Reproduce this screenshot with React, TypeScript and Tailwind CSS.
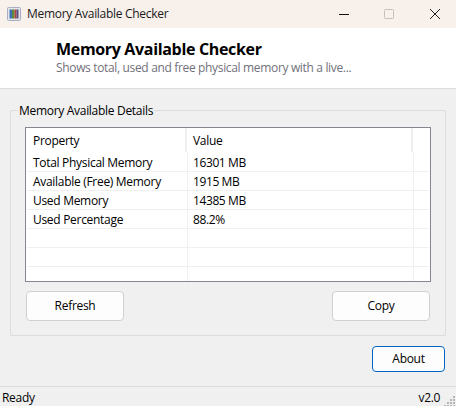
const rows: [string, string][] = [
  ["Total Physical Memory", "16301 MB"],
  ["Available (Free) Memory", "1915 MB"],
  ["Used Memory", "14385 MB"],
  ["Used Percentage", "88.2%"],
  ["", ""],
  ["", ""],
  ["", ""],
];

function AppIcon() {
  return (
    <svg width="14" height="14" viewBox="0 0 14 14" className="block">
      <rect x="0.5" y="0.5" width="13" height="13" rx="1" fill="#e4e6ee" stroke="#a8adbf" />
      <rect x="2.5" y="2.5" width="2.5" height="9" fill="#3f6fb5" />
      <rect x="5" y="2.5" width="2.5" height="9" fill="#5c8a3c" />
      <rect x="7.5" y="2.5" width="2" height="9" fill="#b0433f" />
      <rect x="9.5" y="2.5" width="2" height="9" fill="#5a4f7f" />
    </svg>
  );
}

function Btn({ label, className }: { label: string; className: string }) {
  return (
    <button className={`bg-[#fdfdfd] rounded-[4px] text-[12px] tracking-[-0.3px] text-black flex items-center justify-center ${className}`}>
      {label}
    </button>
  );
}

export default function App() {
  return (
    <div className="w-[456px] h-[406px] overflow-hidden flex flex-col bg-[#f0f0f0] text-black text-[12px] font-['Open_Sans','Noto_Sans',sans-serif]">
      <div className="h-[28px] shrink-0 bg-[#f7f0eb] flex items-center">
        <div className="ml-[7px] w-[14px]"><AppIcon /></div>
        <span className="ml-[6px] text-[12px] tracking-[-0.3px] text-[#1a1a1a]">Memory Available Checker</span>
        <div className="ml-auto flex items-center">
          <svg width="10" height="10" viewBox="0 0 10 10" className="mr-[35px]"><path d="M0 5.5h10" stroke="#111" strokeWidth="1" /></svg>
          <svg width="10" height="10" viewBox="0 0 10 10" className="mr-[36px]"><rect x="0.5" y="0.5" width="9" height="9" rx="1" fill="none" stroke="#c4c0bd" /></svg>
          <svg width="10" height="10" viewBox="0 0 10 10" className="mr-[16px]"><path d="M0 0l10 10M10 0l-10 10" stroke="#222" strokeWidth="1" /></svg>
        </div>
      </div>

      <div className="h-[61px] shrink-0 bg-white border-b border-[#dcdcdc] pl-[56px] pt-[10px]">
        <div className="text-[16px] leading-[22px] font-bold tracking-[-0.33px]">Memory Available Checker</div>
        <div className="text-[12px] leading-[15px] text-[#71717a] tracking-[-0.34px]">Shows total, used and free physical memory with a live...</div>
      </div>

      <div className="relative mx-[10px] mt-[21px] h-[226px] shrink-0 border border-[#dcdcdc] rounded-[2px] px-[14px] pt-[16px]">
        <span className="absolute left-[7px] top-[-8px] bg-[#f0f0f0] px-[1px] leading-[16px] tracking-[-0.3px]">Memory Available Details</span>
        <div className="w-[406px] h-[155px] border border-[#86868f] bg-white overflow-hidden">
          <div className="flex h-[25px]">
            <div className="w-[161px] h-[24px] border-r-2 border-[#f0f0f0] pl-[7px] leading-[26px] tracking-[-0.3px]">Property</div>
            <div className="w-[226px] h-[24px] border-r-2 border-[#f0f0f0] pl-[6px] leading-[26px] tracking-[-0.3px]">Value</div>
          </div>
          {rows.map((r, i) => (
            <div key={i} className="flex h-[19px] border-b border-[#f0f0f0] mr-[1px] ml-[1px]">
              <div className="w-[161px] border-r border-[#f0f0f0] pl-[6px] leading-[19px] tracking-[-0.3px]">{r[0]}</div>
              <div className="w-[226px] border-r border-[#f0f0f0] pl-[5px] leading-[19px] tracking-[-0.4px]">{r[1]}</div>
            </div>
          ))}
        </div>
        <div className="flex justify-between mt-[9px] pl-[1px] w-[405px]">
          <Btn label="Refresh" className="w-[98px] h-[30px] border border-[#d0d0d0]" />
          <Btn label="Copy" className="w-[98px] h-[30px] border border-[#d0d0d0]" />
        </div>
      </div>

      <div className="flex justify-end mt-[10px] pr-[11px] shrink-0">
        <Btn label="About" className="w-[73px] h-[26px] border border-[#0067c0]" />
      </div>

      <div className="relative mt-[14px] flex-1 border-t border-[#dcdcdc] flex items-center justify-between pl-[2px] pr-[16px] pt-[2px]">
        <span className="tracking-[-0.3px]">Ready</span>
        <span className="tracking-[-0.35px]">v2.0</span>
        <svg width="12" height="12" viewBox="0 0 12 12" className="absolute right-0 bottom-0">
          <g fill="#b4b4b4">
            <rect x="9" y="1" width="2" height="2" />
            <rect x="6" y="4" width="2" height="2" />
            <rect x="9" y="4" width="2" height="2" />
            <rect x="3" y="7" width="2" height="2" />
            <rect x="6" y="7" width="2" height="2" />
            <rect x="9" y="7" width="2" height="2" />
            <rect x="0" y="10" width="2" height="2" />
            <rect x="3" y="10" width="2" height="2" />
            <rect x="6" y="10" width="2" height="2" />
            <rect x="9" y="10" width="2" height="2" />
          </g>
        </svg>
      </div>
    </div>
  );
}
